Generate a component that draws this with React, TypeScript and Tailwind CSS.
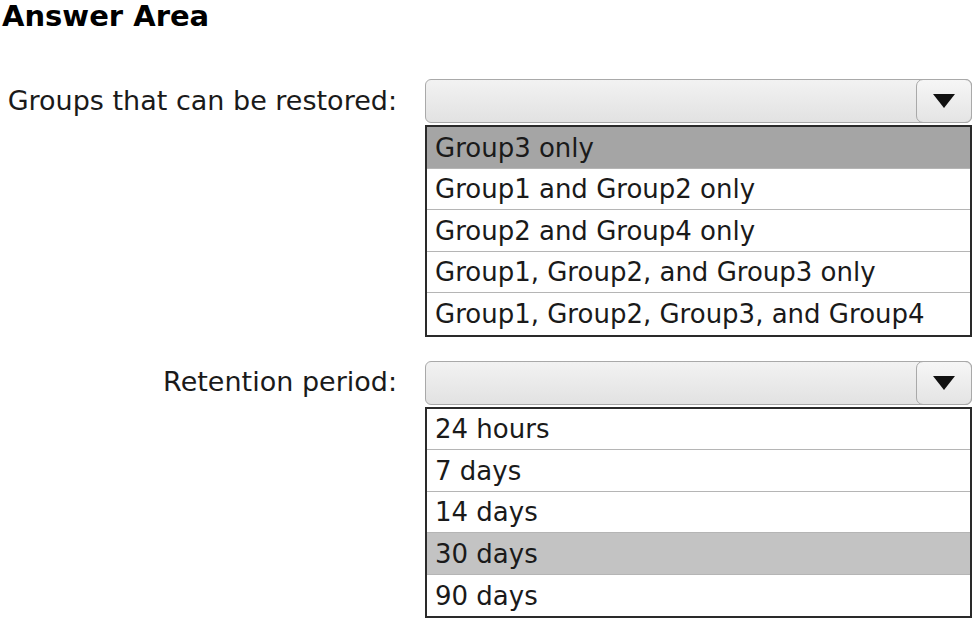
import React from 'react';

type DropdownProps = {
  options: string[];
  selected: number;
  selectedBg: string;
};

const Arrow = () => (
  <svg width="24" height="16" viewBox="0 0 24 16" className="block">
    <polygon points="1,1 23,1 12,15" fill="#111" />
  </svg>
);

const Dropdown: React.FC<DropdownProps> = ({ options, selected, selectedBg }) => {
  return (
    <div className="flex flex-col w-[547px]">
      {/* closed box */}
      <div className="h-[44px] flex rounded-[6px] border border-[#a9a9a9] bg-gradient-to-b from-[#f2f2f2] to-[#e2e2e2]">
        <div className="flex-1" />
        <div className="w-[56px] -my-px -mr-px flex items-center justify-center rounded-[7px] border border-[#a9a9a9] bg-gradient-to-b from-[#f6f6f6] to-[#e4e4e4]">
          <Arrow />
        </div>
      </div>
      {/* open list */}
      <div className="mt-[2px] border-2 border-[#2a2a2a] bg-white">
        {options.map((opt, i) => (
          <div
            key={opt}
            className={`h-[41.5px] flex items-center pl-[8px] pt-[2px] text-[26px] text-[#1a1a1a] ${
              i < options.length - 1 ? 'border-b border-[#b5b5b5]' : ''
            } ${i === selected ? selectedBg : ''}`}
          >
            {opt}
          </div>
        ))}
      </div>
    </div>
  );
};

const App: React.FC = () => {
  return (
    <div
      className="w-[974px] h-[620px] bg-white overflow-hidden text-[#1a1a1a]"
      style={{ fontFamily: '"DejaVu Sans", Verdana, sans-serif' }}
    >
      <h1 className="pl-[2px] pt-[1px] text-[29px] font-bold leading-[30px] text-black">Answer Area</h1>

      <div className="mt-[48px] flex">
        <div className="w-[425px] shrink-0 pr-[28px] h-[44px] flex items-center justify-end text-[27px]">
          Groups that can be restored:
        </div>
        <Dropdown
          options={[
            'Group3 only',
            'Group1 and Group2 only',
            'Group2 and Group4 only',
            'Group1, Group2, and Group3 only',
            'Group1, Group2, Group3, and Group4',
          ]}
          selected={0}
          selectedBg="bg-[#a5a5a5]"
        />
      </div>

      <div className="mt-[24px] flex">
        <div className="w-[425px] shrink-0 pr-[28px] h-[44px] flex items-center justify-end text-[27px]">
          Retention period:
        </div>
        <Dropdown
          options={['24 hours', '7 days', '14 days', '30 days', '90 days']}
          selected={3}
          selectedBg="bg-[#c3c3c3]"
        />
      </div>
    </div>
  );
};

export default App;
